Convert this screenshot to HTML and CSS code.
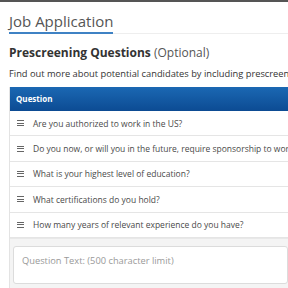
FILE: index.html
```html
<!DOCTYPE html>
<html>
<head>
<meta charset="utf-8">
<link rel="stylesheet" href="styles.css">
</head>
<body>
<div class="page">
  <div class="title-bar"><h1 class="title">Job Application</h1></div>
  <h2 class="section">Prescreening Questions <span class="opt">(Optional)</span></h2>
  <p class="desc">Find out more about potential candidates by including prescreening questions in your job posting.</p>
  <div class="table">
    <div class="thead">Question</div>
    <div class="row"><span class="grip"><i></i><i></i><i></i></span><span class="q">Are you authorized to work in the US?</span></div>
    <div class="row"><span class="grip"><i></i><i></i><i></i></span><span class="q">Do you now, or will you in the future, require sponsorship to work in the US?</span></div>
    <div class="row"><span class="grip"><i></i><i></i><i></i></span><span class="q">What is your highest level of education?</span></div>
    <div class="row"><span class="grip"><i></i><i></i><i></i></span><span class="q">What certifications do you hold?</span></div>
    <div class="row"><span class="grip"><i></i><i></i><i></i></span><span class="q">How many years of relevant experience do you have?</span></div>
    <div class="add">
      <div class="input">Question Text: (500 character limit)</div>
    </div>
  </div>
</div>
</body>
</html>
```
FILE: styles.css
```css
html, body { margin: 0; padding: 0; background: #fff; }
body {
  font-family: "Open Sans", "Liberation Sans", sans-serif;
  color: #333;
  border-top: 2px solid #555;
  overflow: hidden;
  width: 288px;
  height: 286px;
}
.page { padding-left: 9px; white-space: nowrap; overflow: hidden; }
.title-bar { border-bottom: 1px solid #eee; margin-top: 8px; }
.title {
  display: inline-block;
  margin: 0 0 -1px;
  font-size: 15px;
  font-weight: 400;
  color: #555;
  line-height: 20px;
  padding-bottom: 1px;
  border-bottom: 2px solid #3f82c4;
}
.section {
  margin: 10px 0 0;
  font-size: 12px;
  font-weight: 700;
  line-height: 18px;
  color: #333;
}
.opt { font-weight: 400; color: #555; }
.desc { margin: 5px 0 0; font-size: 9.3px; line-height: 14px; color: #333; overflow: hidden; }
.table { margin-top: 6px; border-left: 1px solid #e3e3e3; }
.thead {
  height: 24px;
  line-height: 24px;
  background: linear-gradient(#1b68b3, #0c4b93);
  color: #fff;
  font-size: 8px;
  font-weight: 700;
  padding-left: 6px;
}
.row {
  height: 24.4px;
  border-bottom: 1px solid #e5e5e5;
  display: flex;
  align-items: center;
  font-size: 8.5px;
  color: #4a4a4a;
  overflow: hidden;
}
.grip {
  flex-shrink: 0;
  display: flex;
  flex-direction: column;
  gap: 1.5px;
  width: 7px;
  margin-left: 7px;
  margin-right: 9px;
}
.grip i { display: block; height: 1px; background: #666; }
.add {
  background: #f4f4f4;
  padding: 7px 0 6px 3px;
  border-top: 1px solid #e8e8e8;
}
.input {
  background: #fff;
  border: 1px solid #dcdcdc;
  border-radius: 3px;
  height: 38px;
  padding: 7px 0 0 8px;
  box-sizing: border-box;
  font-size: 9.3px;
  color: #999;
}
```
